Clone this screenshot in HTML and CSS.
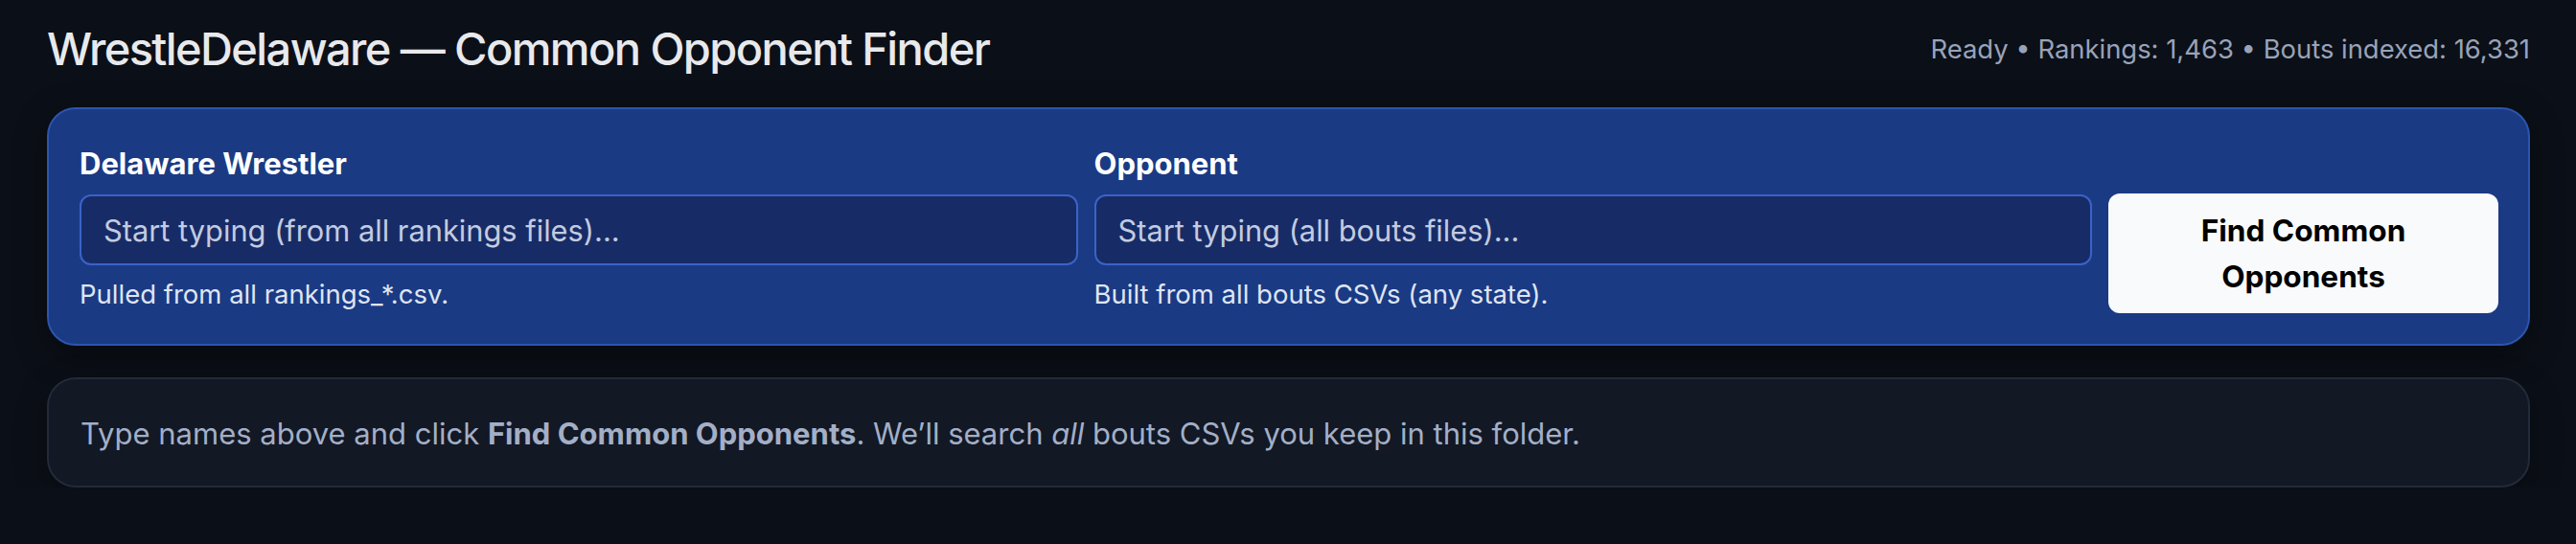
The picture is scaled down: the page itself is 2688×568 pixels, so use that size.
FILE: index.html
```html
<!DOCTYPE html>
<html lang="en">
<head>
<meta charset="utf-8">
<title>WrestleDelaware — Common Opponent Finder</title>
<link rel="stylesheet" href="styles.css">
</head>
<body>
<div class="page">
  <header class="topbar">
    <h1 class="title">WrestleDelaware — Common Opponent Finder</h1>
    <div class="status">Ready • Rankings: 1,463 • Bouts indexed: 16,331</div>
  </header>

  <section class="panel">
    <div class="field">
      <label class="label" for="wrestler">Delaware Wrestler</label>
      <input class="input" id="wrestler" type="text" placeholder="Start typing (from all rankings files)...">
      <div class="help">Pulled from all rankings_*.csv.</div>
    </div>
    <div class="field">
      <label class="label" for="opponent">Opponent</label>
      <input class="input" id="opponent" type="text" placeholder="Start typing (all bouts files)...">
      <div class="help">Built from all bouts CSVs (any state).</div>
    </div>
    <button class="find-btn" type="button">Find Common Opponents</button>
  </section>

  <section class="results">
    <p class="hint">Type names above and click <b>Find Common Opponents</b>. We’ll search <i>all</i> bouts CSVs you keep in this folder.</p>
  </section>
</div>
</body>
</html>
```

FILE: styles.css
```css
* { box-sizing: border-box; }

html, body {
  margin: 0;
  padding: 0;
  background: #0b0f17;
}

body {
  font-family: Inter, "Noto Sans", "DejaVu Sans", sans-serif;
  color: #e6e8ec;
}

.page {
  padding: 21px 48px 0 49px;
}

.topbar {
  display: flex;
  justify-content: space-between;
  align-items: center;
}

.title {
  margin: 0;
  font-size: 47px;
  line-height: 60px;
  font-weight: 500;
  color: #e8e9ec;
  letter-spacing: -1.6px;
}

.status {
  font-size: 27.4px;
  color: #98a3ba;
}

.panel {
  margin-top: 31px;
  background: #1b3a84;
  border: 2px solid #2c55ae;
  border-radius: 30px;
  padding: 39px 31px 32px 32px;
  display: grid;
  grid-template-columns: 1fr 1fr 407px;
  column-gap: 17px;
  align-items: end;
  box-shadow: 0 10px 34px rgba(0, 0, 0, 0.35);
}

.field {
  display: flex;
  flex-direction: column;
}

.label {
  font-size: 31px;
  line-height: 36px;
  font-weight: 700;
  color: #ffffff;
}

.input {
  margin-top: 14px;
  height: 74px;
  width: 100%;
  background: #172c66;
  border: 2px solid #3a63c6;
  border-radius: 12px;
  padding: 0 23px;
  font-family: Inter, "Noto Sans", sans-serif;
  font-size: 30.8px;
  color: #e6e8ec;
  outline: none;
}

.input::placeholder {
  color: #c3cbe0;
  opacity: 1;
}

.help {
  margin-top: 10px;
  font-size: 27.5px;
  line-height: 40px;
  color: #dfe5f2;
}

.find-btn {
  height: 125px;
  background: #f8fafc;
  border: none;
  border-radius: 12px;
  font-family: Inter, "Noto Sans", sans-serif;
  font-size: 31.6px;
  line-height: 48px;
  font-weight: 700;
  color: #000000;
  padding: 0 50px;
}

.results {
  margin-top: 33px;
  background: #121824;
  border: 2px solid #232b3a;
  border-radius: 30px;
  padding: 35px 33px 32px;
  box-shadow: 0 10px 34px rgba(0, 0, 0, 0.3);
}

.hint {
  margin: 0;
  font-size: 31px;
  line-height: 44px;
  color: #a3afc7;
}

.hint b {
  font-weight: 700;
}
```
